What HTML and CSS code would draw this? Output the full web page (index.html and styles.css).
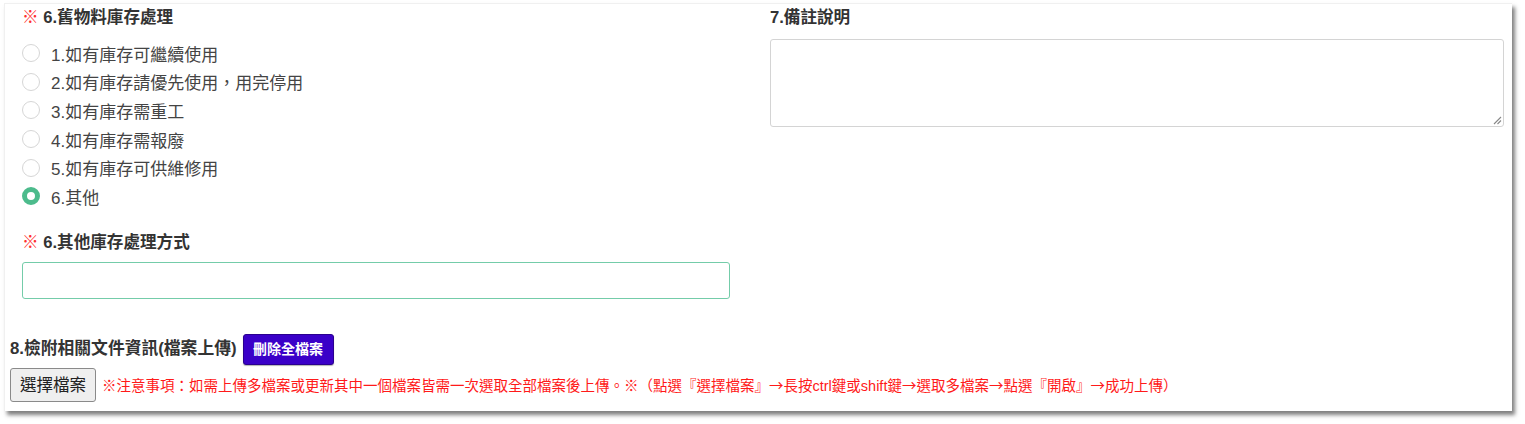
FILE: index.html
```html
<!DOCTYPE html>
<html lang="zh-Hant">
<head>
<meta charset="utf-8">
<link rel="stylesheet" href="styles.css">
</head>
<body>
<div class="panel">
  <div class="grid">
    <div class="col">
      <div class="label"><span class="req">※</span> 6.舊物料庫存處理</div>
      <ul class="radios">
        <li><span class="radio"></span>1.如有庫存可繼續使用</li>
        <li><span class="radio"></span>2.如有庫存請優先使用，用完停用</li>
        <li><span class="radio"></span>3.如有庫存需重工</li>
        <li><span class="radio"></span>4.如有庫存需報廢</li>
        <li><span class="radio"></span>5.如有庫存可供維修用</li>
        <li><span class="radio checked"></span>6.其他</li>
      </ul>
      <div class="label label2"><span class="req">※</span> 6.其他庫存處理方式</div>
      <div class="input"></div>
    </div>
    <div class="col">
      <div class="label">7.備註說明</div>
      <div class="textarea"><svg class="grip" width="10" height="10" viewBox="0 0 10 10"><path d="M9 2 L2 9 M9 5.5 L5.5 9" stroke="#888" stroke-width="1.1" fill="none"/></svg></div>
    </div>
  </div>
  <div class="upload">
    <div class="uprow">
      <span class="label">8.檢附相關文件資訊(檔案上傳)</span>
      <span class="delbtn">刪除全檔案</span>
    </div>
    <div class="filerow">
      <span class="filebtn">選擇檔案</span>
      <span class="notice">※注意事項：如需上傳多檔案或更新其中一個檔案皆需一次選取全部檔案後上傳。※（點選『選擇檔案』<span class="arr">→</span>長按ctrl鍵或shift鍵<span class="arr">→</span>選取多檔案<span class="arr">→</span>點選『開啟』<span class="arr">→</span>成功上傳）</span>
    </div>
  </div>
</div>
</body>
</html>
```

FILE: styles.css
```css
* { box-sizing: border-box; }
html, body { margin: 0; padding: 0; background: #fff; }
body {
  font-family: "Liberation Sans", "Noto Sans CJK TC", sans-serif;
  color: #333;
  padding: 3px 0 0 4px;
  height: 424px;
}
.panel {
  width: 1508px;
  height: 408px;
  background: #fff;
  border-top: 1px solid #f0f0f0;
  border-left: 1px solid #f0f0f0;
  box-shadow: 3px 4px 4px rgba(0,0,0,0.5);
  padding: 3px 0 0 4px;
}
.grid {
  display: grid;
  grid-template-columns: 708px 734px;
  column-gap: 40px;
  padding-left: 13px;
}
.label {
  font-size: 16.6px;
  font-weight: bold;
  line-height: 22px;
  color: #333;
}
.req { color: #ff3030; font-weight: normal; }
.radios {
  list-style: none;
  margin: 10px 0 0 0;
  padding: 0;
}
.radios li {
  display: flex;
  align-items: center;
  height: 28.6px;
  font-size: 17px;
  color: #444;
}
.radio {
  width: 18px;
  height: 18px;
  border-radius: 50%;
  border: 1.5px solid #d6d6d6;
  background: #fff;
  margin-right: 11px;
  flex: none;
}
.radio.checked {
  border: 5.5px solid #4cbb8c;
  background: #fff;
}
.label2 { margin-top: 21px; }
.input {
  margin-top: 8px;
  height: 37px;
  border: 1.5px solid #74cca9;
  border-radius: 3px;
}
.textarea {
  position: relative;
  margin-top: 10px;
  height: 88px;
  border: 1px solid #d4d4d4;
  border-radius: 3px;
}
.grip { position: absolute; right: 1px; bottom: 1px; }
.upload { margin-top: 35px; padding-left: 1px; }
.uprow {
  display: flex;
  align-items: center;
  gap: 6px;
}
.uprow .label { font-size: 16.8px; }
.delbtn {
  display: inline-block;
  width: 91px;
  height: 31px;
  line-height: 29px;
  text-align: center;
  background: #3a00c8;
  border: 1px solid #2a0090;
  border-radius: 3px;
  color: #fff;
  font-weight: bold;
  font-size: 14px;
  box-shadow: 0 1px 1px rgba(0,0,0,0.3);
}
.filerow {
  display: flex;
  align-items: center;
  margin-top: 3px;
  gap: 6px;
}
.filebtn {
  display: inline-block;
  width: 86px;
  height: 34px;
  line-height: 32px;
  text-align: center;
  background: #efefef;
  border: 1px solid #8a8a8a;
  border-radius: 3px;
  font-size: 16.5px;
  color: #222;
}
.notice {
  color: #ff1a1a;
  font-size: 14.5px;
}
.arr {
  font-family: "Noto Sans CJK TC", sans-serif;
}
```
